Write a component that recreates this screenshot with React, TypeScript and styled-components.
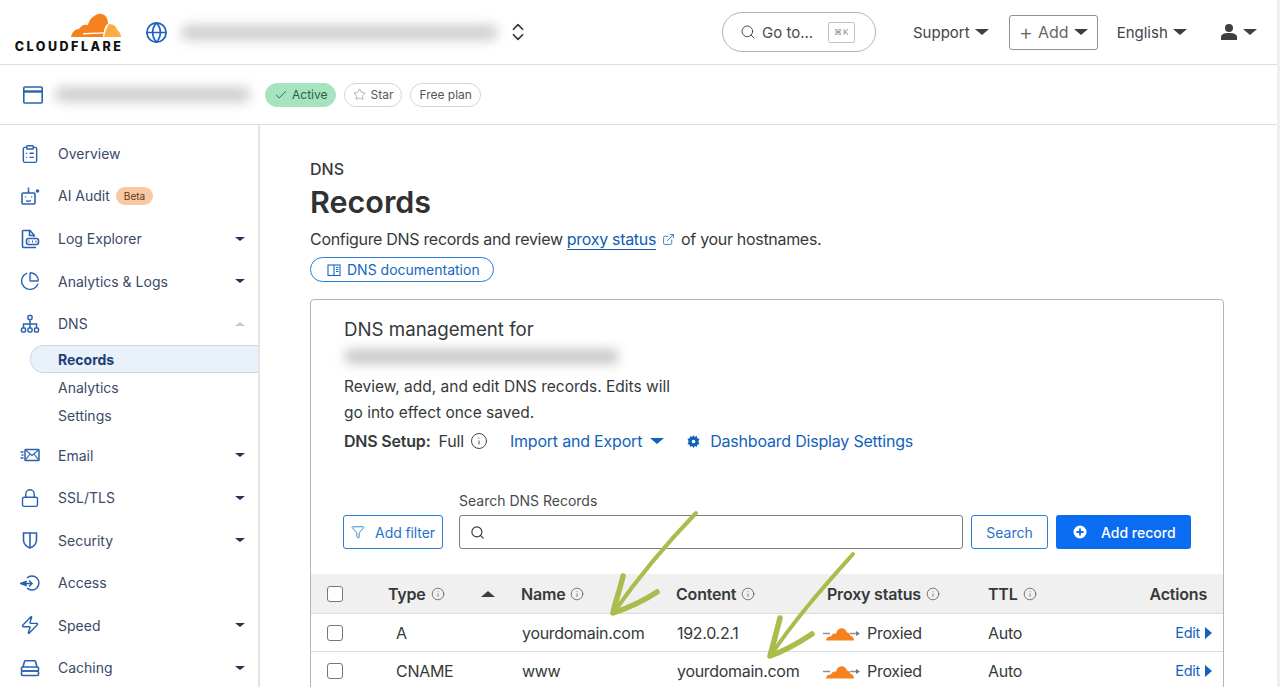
import React from "react";
import styled, { createGlobalStyle } from "styled-components";
import {
  Check,
  ChartPie,
  ChevronsUpDown,
  ClipboardList,
  ExternalLink,
  Filter,
  Globe,
  Info,
  Lock,
  Search as SearchIcon,
  Star,
  Zap
} from "lucide-react";

const GlobalStyle = createGlobalStyle`
  html, body {
    margin: 0;
    padding: 0;
    height: 687px;
    overflow: hidden;
    background: #fff;
  }
  body {
    font-family: Inter, "Liberation Sans", sans-serif;
    color: #36393a;
  }
  * {
    box-sizing: border-box;
  }
`;

const Page = styled.div`
  position: relative;
  width: 1280px;
  height: 687px;
  overflow: hidden;
  display: flex;
  flex-direction: column;
  border-right: 3px solid #efefef;
`;

const TopBar = styled.header`
  height: 65px;
  flex: none;
  display: flex;
  align-items: center;
  padding: 0 20px 0 14px;
  border-bottom: 1px solid #dedede;
`;

const Logo = styled.div`
  width: 108px;
  flex: none;
  display: flex;
  flex-direction: column;
  align-items: flex-end;
  svg {
    display: block;
    margin-right: 1px;
  }
`;

const LogoText = styled.span`
  font-size: 12.5px;
  line-height: 11px;
  font-weight: 800;
  letter-spacing: 2.5px;
  color: #111;
  white-space: nowrap;
  margin-top: 3px;
  margin-right: -1.5px;
`;

const AccountGlobe = styled(Globe)`
  color: #1f62bd;
  margin-left: 23px;
  flex: none;
`;

const Blur = styled.div<{ $w: number; $h?: number; $shade?: string }>`
  width: ${p => p.$w}px;
  height: ${p => p.$h || 14}px;
  border-radius: 7px;
  background: ${p => p.$shade || "#cdcdcd"};
  filter: blur(6px);
  flex: none;
`;

const AccountBlur = styled(Blur)`
  margin-left: 13px;
`;

const Switcher = styled(ChevronsUpDown)`
  color: #333;
  margin-left: 9px;
  flex: none;
`;

const GoTo = styled.div`
  margin-left: 193px;
  width: 154px;
  height: 40px;
  border: 1px solid #b4b4b4;
  border-radius: 20px;
  display: flex;
  align-items: center;
  padding-left: 17px;
  font-size: 15px;
  color: #4a4a4a;
  flex: none;
  span {
    margin-left: 6px;
  }
`;

const Kbd = styled.kbd`
  margin-left: 15px;
  width: 27px;
  height: 21px;
  border: 1px solid #c4c4c4;
  border-radius: 2px;
  font-family: inherit;
  font-size: 8px;
  color: #8a8a8a;
  display: flex;
  align-items: center;
  justify-content: center;
  letter-spacing: 1px;
`;

const Caret = styled.i<{ $size?: number; $shade?: string }>`
  display: inline-block;
  flex: none;
  width: 0;
  height: 0;
  border-left: ${p => p.$size || 7}px solid transparent;
  border-right: ${p => p.$size || 7}px solid transparent;
  border-top: ${p => (p.$size || 7) * 0.95}px solid ${p => p.$shade || "#3d3d3d"};
`;

const UpCaret = styled(Caret)`
  border-top: 0;
  border-bottom: ${p => (p.$size || 7) * 0.9}px solid ${p => p.$shade || "#3d3d3d"};
`;

const TopMenu = styled.div<{ $left: number }>`
  margin-left: ${p => p.$left}px;
  display: flex;
  align-items: center;
  gap: 5px;
  font-size: 15px;
  color: #444;
  flex: none;
`;

const AddButton = styled.div`
  margin-left: 20px;
  width: 89px;
  height: 35px;
  border: 1px solid #8f8f8f;
  border-radius: 3px;
  display: flex;
  align-items: center;
  padding-left: 9px;
  gap: 5px;
  font-size: 16px;
  color: #666;
  flex: none;
`;

const PlusSign = styled.span`
  font-size: 22px;
  font-weight: 300;
  line-height: 20px;
`;

const ZoneBar = styled.div`
  height: 60px;
  flex: none;
  display: flex;
  align-items: center;
  padding-left: 22px;
  border-bottom: 1px solid #dedede;
`;

const ZoneBlur = styled(Blur)`
  margin-left: 11px;
  margin-right: 15px;
`;

const Chip = styled.div<{ $active?: boolean }>`
  height: 24px;
  margin-right: 8px;
  padding: 0 8px;
  border-radius: 12px;
  display: flex;
  align-items: center;
  gap: 4px;
  font-size: 12px;
  color: ${p => (p.$active ? "#2e5d48" : "#555")};
  background: ${p => (p.$active ? "#a6e3bf" : "#fff")};
  border: 1px solid ${p => (p.$active ? "#a6e3bf" : "#d6d6d6")};
`;

const Body = styled.div`
  flex: 1;
  display: flex;
  min-height: 0;
`;

const Sidebar = styled.nav`
  width: 260px;
  flex: none;
  padding-top: 7.5px;
  border-right: 2px solid #e4e4e4;
`;

const NavItem = styled.div<{ $spaced?: boolean }>`
  height: 42.5px;
  margin-top: ${p => (p.$spaced ? 5 : 0)}px;
  display: flex;
  align-items: center;
  font-size: 14px;
  color: #3b4a68;
  padding-right: 13px;
`;

const NavIcon = styled.span`
  width: 58px;
  padding-left: 20px;
  display: flex;
  flex: none;
  color: #2c62ad;
  svg {
    display: block;
  }
`;

const NavLabel = styled.span`
  flex: 1;
`;

const BetaBadge = styled.span`
  background: #f8c8a0;
  color: #5f3a1c;
  font-size: 10px;
  height: 18px;
  padding: 0 8px;
  border-radius: 9px;
  display: inline-flex;
  align-items: center;
  margin-left: 6px;
  vertical-align: 1px;
`;

const SubItem = styled.div<{ $active?: boolean }>`
  height: 28px;
  margin-left: 30px;
  padding-left: ${p => (p.$active ? 27 : 28)}px;
  display: flex;
  align-items: center;
  font-size: 14px;
  font-weight: ${p => (p.$active ? 700 : 400)};
  color: ${p => (p.$active ? "#1f3f77" : "#3b4a68")};
  background: ${p => (p.$active ? "#e9f1fb" : "transparent")};
  border: ${p => (p.$active ? "1px solid #c8d8ef" : "0")};
  border-right: 0;
  border-radius: 14px 0 0 14px;
`;

const Main = styled.main`
  flex: 1;
  min-width: 0;
  padding: 34px 53px 0 50px;
`;

const Crumb = styled.div`
  font-size: 16px;
  line-height: 20px;
  font-weight: 500;
`;

const Title = styled.h1`
  margin: 1px 0 0;
  font-size: 30.5px;
  line-height: 44px;
  font-weight: 600;
  color: #2f3132;
`;

const Intro = styled.p`
  margin: 3px 0 0;
  font-size: 16px;
  line-height: 24px;
  letter-spacing: -0.31px;
`;

const TextLink = styled.a`
  color: #0f5cb0;
  border-bottom: 1px solid #0f5cb0;
`;

const OutLink = styled(ExternalLink)`
  color: #2a6bbd;
  margin: 0 6px 0 6px;
  vertical-align: -1px;
`;

const DocsButton = styled.div`
  margin-top: 6px;
  width: 184px;
  height: 25px;
  border: 1px solid #2c7cd8;
  border-radius: 13px;
  display: flex;
  align-items: center;
  padding-left: 16px;
  gap: 6px;
  font-size: 14px;
  color: #1767c2;
`;

const Card = styled.section`
  margin-top: 17px;
  border: 1px solid #b5b5b5;
  border-radius: 4px 4px 0 0;
  height: 420px;
`;

const CardTop = styled.div`
  padding: 18px 33px 0 33px;
`;

const CardTitle = styled.h2`
  margin: 0;
  font-size: 18.7px;
  line-height: 24px;
  font-weight: 400;
`;

const CardBlur = styled(Blur)`
  margin: 7px 0 10px;
  height: 15px;
`;

const CardText = styled.p`
  margin: 0;
  font-size: 15.5px;
  line-height: 26px;
  width: 335px;
`;

const SetupRow = styled.div`
  display: flex;
  align-items: center;
  height: 30px;
  font-size: 16px;
  letter-spacing: -0.2px;
  b {
    font-weight: 600;
    margin-right: 8px;
  }
`;

const SetupInfo = styled(Info)`
  margin-left: 6px;
  color: #444;
`;

const BlueAction = styled.span<{ $left: number; $gap: number }>`
  margin-left: ${p => p.$left}px;
  display: flex;
  align-items: center;
  gap: ${p => p.$gap}px;
  color: #1262bd;
`;

const ToolRow = styled.div`
  margin-top: 35px;
  display: flex;
  align-items: flex-end;
  gap: 8px;
`;

const GhostButton = styled.div<{ $w: number }>`
  width: ${p => p.$w}px;
  height: 34px;
  flex: none;
  border: 1px solid #2c7cd8;
  border-radius: 3px;
  display: flex;
  align-items: center;
  justify-content: center;
  gap: 9px;
  font-size: 14px;
  color: #2a72c8;
`;

const FilterButton = styled(GhostButton)`
  margin-left: -1px;
  margin-right: 8px;
  gap: 10px;
  letter-spacing: -0.1px;
`;

const SearchField = styled.div`
  width: 504px;
  flex: none;
  label {
    display: block;
    font-size: 14px;
    line-height: 20px;
    margin-bottom: 4px;
    color: #4a4a4a;
  }
`;

const SearchBox = styled.div`
  height: 34px;
  border: 1px solid #7d7d7d;
  border-radius: 3px;
  display: flex;
  align-items: center;
  padding-left: 10px;
  color: #333;
`;

const PrimaryButton = styled.div`
  width: 135px;
  height: 34px;
  flex: none;
  background: #0a6cf0;
  border-radius: 3px;
  display: flex;
  align-items: center;
  padding-left: 17px;
  gap: 14px;
  font-size: 14px;
  font-weight: 500;
  color: #fff;
`;

const Table = styled.div`
  margin-top: 25px;
`;

const Row = styled.div<{ $head?: boolean }>`
  display: grid;
  grid-template-columns: 61px 133px 155px 151px 161px 1fr auto;
  align-items: center;
  height: ${p => (p.$head ? 40 : 38)}px;
  padding: 0 16px;
  font-size: 16px;
  letter-spacing: ${p => (p.$head ? -0.2 : -0.3)}px;
  background: ${p => (p.$head ? "#f0f0f0" : "#fff")};
  border-bottom: 1px solid #dcdcdc;
  font-weight: ${p => (p.$head ? 600 : 400)};
`;

const Box = styled.span`
  width: 16px;
  height: 16px;
  border: 1px solid #777;
  border-radius: 3px;
  background: #fff;
  display: block;
`;

const HeadCell = styled.span`
  display: flex;
  align-items: center;
  gap: 5px;
`;

const ColInfo = styled(Info)`
  color: #555;
`;

const SortMark = styled(UpCaret)`
  margin-left: 31px;
`;

const TypeCell = styled.span`
  padding-left: 8px;
`;

const NameCell = styled.span`
  padding-left: 1px;
`;

const ProxyCell = styled.span`
  display: flex;
  align-items: center;
  gap: 7px;
  margin-left: -4px;
`;

const EditLink = styled.a`
  font-size: 14.5px;
  color: #1262bd;
  display: flex;
  align-items: center;
  gap: 5px;
  margin-right: -5px;
`;

const EditCaret = styled.i`
  width: 0;
  height: 0;
  border-top: 6.5px solid transparent;
  border-bottom: 6.5px solid transparent;
  border-left: 7.5px solid #1262bd;
`;

const ArrowLayer = styled.svg`
  position: absolute;
  left: 0;
  top: 0;
  pointer-events: none;
`;

const CloudLogo = () => (
  <svg width="50" height="25" viewBox="0 0 50 25">
    <path
      fill="#f6821f"
      d="M0 24C1 19 4 16 8 16C10 12 14 11 17 12C19 4 26 0 31 1C35 2 37 6 37 11C34 12 33 17 32 24Z"
    />
    <path fill="#fbad41" d="M33 24C34 18 36 14 38 11C43 11 46 14 46 17C48 18 50 21 50 24Z" />
    <path fill="#fff" d="M12 20L34 19.2V20.600L12 21.400Z" />
  </svg>
);

const BrowserIcon = () => (
  <svg width="22" height="20" viewBox="0 0 22 20" fill="none" stroke="#2c62ad" strokeWidth="1.6">
    <rect x="1.800" y="2" width="18.400" height="16" rx="1" />
    <path d="M1.800 6.500H20.200" strokeWidth="2.400" />
  </svg>
);

const RobotIcon = () => (
  <svg width="20" height="20" viewBox="0 0 20 20" fill="none" stroke="currentColor" strokeWidth="1.600">
    <rect x="2" y="7" width="13" height="11" rx="1" />
    <path d="M8.500 7V3.500" />
    <circle cx="8.500" cy="2.500" r="1" fill="currentColor" stroke="none" />
    <circle cx="17.500" cy="5" r="1.800" fill="currentColor" stroke="none" />
    <path d="M5.500 10.500V11.500M11.500 10.500V11.500M6 14.500C7.500 15.500 9.500 15.500 11 14.500" strokeWidth="1.400" />
  </svg>
);

const LogFileIcon = () => (
  <svg width="20" height="20" viewBox="0 0 20 20" fill="none" stroke="currentColor" strokeWidth="1.600">
    <path d="M14 8V6L10 1.500H3.500A1 1 0 0 0 2.500 2.500V17.500A1 1 0 0 0 3.500 18.500H16" />
    <path d="M9.500 1.500V6.500H14" />
    <rect x="6.500" y="9.500" width="12" height="6" rx="2" />
    <path d="M9 11.500V13.500M12.500 11.500V13.500M16 11.500V13.500" strokeWidth="1" />
  </svg>
);

const TreeIcon = () => (
  <svg width="20" height="20" viewBox="0 0 20 20" fill="none" stroke="currentColor" strokeWidth="1.500">
    <rect x="8" y="1.500" width="4" height="4" rx="1" />
    <rect x="1.500" y="14" width="4" height="4" rx="1" />
    <rect x="8" y="14" width="4" height="4" rx="1" />
    <rect x="14.500" y="14" width="4" height="4" rx="1" />
    <path d="M10 5.500V14M3.500 14V10H16.500V14" />
  </svg>
);

const MailFastIcon = () => (
  <svg width="20" height="16" viewBox="0 0 20 16" fill="none" stroke="currentColor" strokeWidth="1.500">
    <rect x="5" y="2.500" width="14" height="11" rx="0.800" />
    <path d="M5.500 3L12 8.500L18.500 3M5.500 13L10 7M18.500 13L14 7" strokeWidth="1.200" />
    <path d="M0.500 5H3.500M1.500 8H3.500M0.500 11H3.500" />
  </svg>
);

const ShieldIcon = () => (
  <svg width="20" height="20" viewBox="0 0 20 20" fill="none" stroke="currentColor" strokeWidth="1.600">
    <path d="M3.500 3H16.500V10C16.500 14 13 17 10 18C7 17 3.500 14 3.500 10Z" />
    <path d="M10 3V18" />
  </svg>
);

const AccessIcon = () => (
  <svg width="21" height="18" viewBox="0 0 21 18" fill="none" stroke="currentColor" strokeWidth="1.500">
    <path d="M7 4A7 7 0 1 1 7 14" />
    <path d="M1 9.500H12M9 6.500L12 9.500L9 12.500" />
    <path d="M0.500 9.500L6 7.500V11.500Z" fill="currentColor" />
  </svg>
);

const CacheIcon = () => (
  <svg width="20" height="18" viewBox="0 0 20 18" fill="none" stroke="currentColor" strokeWidth="1.600">
    <path d="M3 8L4.500 2.500A1 1 0 0 1 5.500 1.800H14.500A1 1 0 0 1 15.500 2.500L17 8" />
    <rect x="1.500" y="8" width="17" height="4" rx="1" />
    <rect x="1.500" y="12" width="17" height="4.500" rx="1" />
  </svg>
);

const UserIcon = () => (
  <svg width="18" height="18" viewBox="0 0 18 18" fill="#3f3f3f">
    <circle cx="9" cy="5" r="4" />
    <path d="M1 17V14C1 11.500 4 10 9 10C14 10 17 11.500 17 14V17Z" />
  </svg>
);

const BookIcon = () => (
  <svg width="14" height="14" viewBox="0 0 14 14" fill="none" stroke="currentColor" strokeWidth="1.100">
    <rect x="1" y="2" width="12" height="10.500" />
    <path d="M7 2V12.500M9 4.500H11.500M9 6.500H11.500M9 8.500H11.500" />
  </svg>
);

const GearIcon = () => (
  <svg width="13" height="13" viewBox="0 0 12 12" fill="#1262bd">
    <path
      fillRule="evenodd"
      d="M6 0L7.200 1.800L9.200 1L9.400 3L11.500 3.500L10.500 6L11.500 8.500L9.400 9L9.200 11L7.200 10.200L6 12L4.800 10.200L2.800 11L2.600 9L0.500 8.500L1.500 6L0.500 3.500L2.600 3L2.800 1L4.800 1.800ZM6 4.300A1.700 1.700 0 1 0 6 7.700A1.700 1.700 0 1 0 6 4.300Z"
    />
  </svg>
);

const PlusCircleIcon = () => (
  <svg width="14" height="14" viewBox="0 0 14 14">
    <circle cx="7" cy="7" r="6.500" fill="#fff" />
    <path d="M7 3.500V10.500M3.500 7H10.500" stroke="#0a6cf0" strokeWidth="1.800" />
  </svg>
);

const ProxyCloud = () => (
  <svg width="37" height="16" viewBox="0 0 37 16">
    <path d="M0 8.500H7M27 8.500H34" stroke="#9a8f85" strokeWidth="1.600" />
    <path d="M33 6L37 8.500L33 11Z" fill="#6c7a90" />
    <path
      fill="#f6821f"
      d="M3 15.500C3 13 5 11 8 11.500C9 9 11 8 13 9C14 2 22 1 24 7.500C26 7.500 27 9 27.500 11C29.500 11 31 13 31 15.500Z"
    />
  </svg>
);

const Arrow = ({ d, head }: { d: string; head: string }) => (
  <g fill="none" stroke="#a8bd4c" strokeLinecap="round" strokeLinejoin="round">
    <path d={d} strokeWidth="4" />
    <path d={head} strokeWidth="5.500" />
  </g>
);

const navTop = [
  { label: "Overview", icon: <ClipboardList size={20} strokeWidth={1.7} /> },
  { label: "AI Audit", icon: <RobotIcon />, beta: true },
  { label: "Log Explorer", icon: <LogFileIcon />, open: true },
  { label: "Analytics & Logs", icon: <ChartPie size={20} strokeWidth={1.7} />, open: true }
];

const navBottom = [
  { label: "Email", icon: <MailFastIcon />, open: true },
  { label: "SSL/TLS", icon: <Lock size={20} strokeWidth={1.7} />, open: true },
  { label: "Security", icon: <ShieldIcon />, open: true },
  { label: "Access", icon: <AccessIcon /> },
  { label: "Speed", icon: <Zap size={20} strokeWidth={1.7} />, open: true },
  { label: "Caching", icon: <CacheIcon />, open: true }
];

const records = [
  { type: "A", name: "yourdomain.com", content: "192.0.2.1" },
  { type: "CNAME", name: "www", content: "yourdomain.com" }
];

const App: React.FC = () => (
  <Page>
    <GlobalStyle />
    <TopBar>
      <Logo>
        <CloudLogo />
        <LogoText>CLOUDFLARE</LogoText>
      </Logo>
      <AccountGlobe size={23} strokeWidth={1.8} />
      <AccountBlur $w={317} $h={15} />
      <Switcher size={22} strokeWidth={1.8} />
      <GoTo>
        <SearchIcon size={16} strokeWidth={1.5} />
        <span>Go to...</span>
        <Kbd>⌘K</Kbd>
      </GoTo>
      <TopMenu $left={37}>
        Support <Caret />
      </TopMenu>
      <AddButton>
        <PlusSign>+</PlusSign> Add <Caret />
      </AddButton>
      <TopMenu $left={19}>
        English <Caret />
      </TopMenu>
      <TopMenu $left={33}>
        <UserIcon /> <Caret />
      </TopMenu>
    </TopBar>
    <ZoneBar>
      <BrowserIcon />
      <ZoneBlur $w={195} $h={15} />
      <Chip $active>
        <Check size={14} strokeWidth={1.6} /> Active
      </Chip>
      <Chip>
        <Star size={13} strokeWidth={1.2} color="#888" /> Star
      </Chip>
      <Chip>Free plan</Chip>
    </ZoneBar>
    <Body>
      <Sidebar>
        {navTop.map(n => (
          <NavItem key={n.label}>
            <NavIcon>{n.icon}</NavIcon>
            <NavLabel>
              {n.label}
              {n.beta && <BetaBadge>Beta</BetaBadge>}
            </NavLabel>
            {n.open && <Caret $size={5} $shade="#22345a" />}
          </NavItem>
        ))}
        <NavItem>
          <NavIcon>
            <TreeIcon />
          </NavIcon>
          <NavLabel>DNS</NavLabel>
          <UpCaret $size={5} $shade="#c3c9d3" />
        </NavItem>
        <SubItem $active>Records</SubItem>
        <SubItem>Analytics</SubItem>
        <SubItem>Settings</SubItem>
        {navBottom.map((n, i) => (
          <NavItem key={n.label} $spaced={i === 0}>
            <NavIcon>{n.icon}</NavIcon>
            <NavLabel>{n.label}</NavLabel>
            {n.open && <Caret $size={5} $shade="#22345a" />}
          </NavItem>
        ))}
      </Sidebar>
      <Main>
        <Crumb>DNS</Crumb>
        <Title>Records</Title>
        <Intro>
          Configure DNS records and review <TextLink>proxy status</TextLink>
          <OutLink size={13} strokeWidth={1.6} />
          of your hostnames.
        </Intro>
        <DocsButton>
          <BookIcon /> DNS documentation
        </DocsButton>
        <Card>
          <CardTop>
            <CardTitle>DNS management for</CardTitle>
            <CardBlur $w={275} $shade="#c8c8c8" />
            <CardText>Review, add, and edit DNS records. Edits will go into effect once saved.</CardText>
            <SetupRow>
              <b>DNS Setup:</b> Full
              <SetupInfo size={18} strokeWidth={1.3} />
              <BlueAction $left={22} $gap={8}>
                Import and Export <Caret $shade="#1262bd" />
              </BlueAction>
              <BlueAction $left={23} $gap={10}>
                <GearIcon /> Dashboard Display Settings
              </BlueAction>
            </SetupRow>
            <ToolRow>
              <FilterButton $w={100}>
                <Filter size={14} strokeWidth={1.5} /> Add filter
              </FilterButton>
              <SearchField>
                <label>Search DNS Records</label>
                <SearchBox>
                  <SearchIcon size={15} strokeWidth={1.8} />
                </SearchBox>
              </SearchField>
              <GhostButton $w={77}>Search</GhostButton>
              <PrimaryButton>
                <PlusCircleIcon /> Add record
              </PrimaryButton>
            </ToolRow>
          </CardTop>
          <Table>
            <Row $head>
              <Box />
              <HeadCell>
                Type <ColInfo size={14} strokeWidth={1.3} />
                <SortMark />
              </HeadCell>
              <HeadCell>
                Name <ColInfo size={14} strokeWidth={1.3} />
              </HeadCell>
              <HeadCell>
                Content <ColInfo size={14} strokeWidth={1.3} />
              </HeadCell>
              <HeadCell>
                Proxy status <ColInfo size={14} strokeWidth={1.3} />
              </HeadCell>
              <HeadCell>
                TTL <ColInfo size={14} strokeWidth={1.3} />
              </HeadCell>
              <span>Actions</span>
            </Row>
            {records.map(r => (
              <Row key={r.type}>
                <Box />
                <TypeCell>{r.type}</TypeCell>
                <NameCell>{r.name}</NameCell>
                <NameCell>{r.content}</NameCell>
                <ProxyCell>
                  <ProxyCloud /> Proxied
                </ProxyCell>
                <span>Auto</span>
                <EditLink>
                  Edit <EditCaret />
                </EditLink>
              </Row>
            ))}
          </Table>
        </Card>
      </Main>
    </Body>
    <ArrowLayer width="1280" height="687" viewBox="0 0 1280 687">
      <Arrow d="M696 513C670 540 640 575 614 612" head="M623 576C620 590 615 602 613 613C628 608 645 600 657 592" />
      <Arrow d="M853 554C828 582 798 615 771 655" head="M780 618C777 630 773 645 770 656C784 651 800 642 812 634" />
    </ArrowLayer>
  </Page>
);

export default App;
